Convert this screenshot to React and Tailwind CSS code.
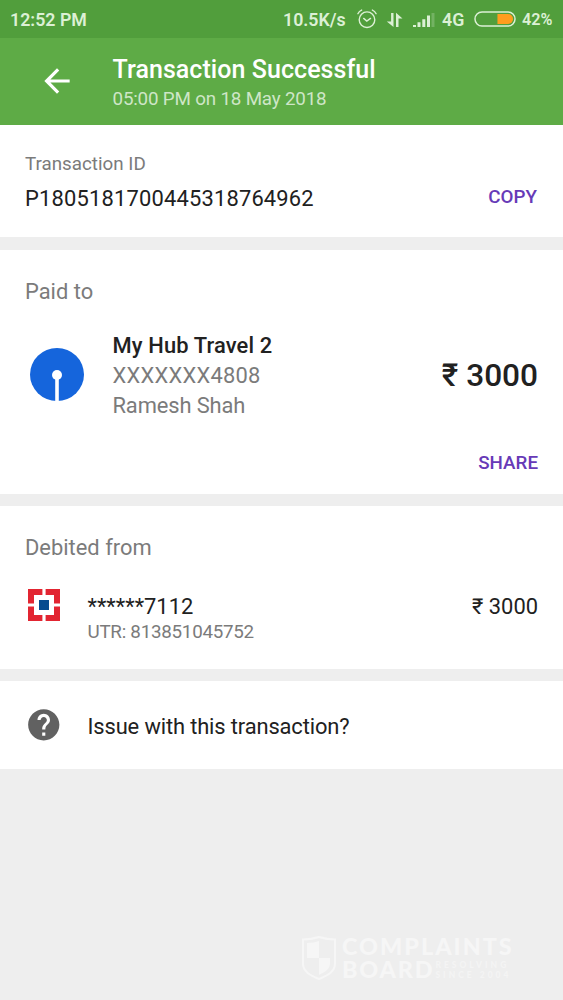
import React from 'react';

const StatusBar = () => {
  return (
    <div className="flex h-[38px] items-center bg-[#519e3c] pl-[10px] pr-[9px] pt-px text-[17.8px] font-semibold text-[#dcf0d5]">
      <span className="w-[273px] whitespace-nowrap leading-none">12:52 PM</span>
      <span className="w-[74px] whitespace-nowrap leading-none">10.5K/s</span>
      <svg className="mb-[2px] h-5 w-5 shrink-0" viewBox="0 0 20 20" fill="none" stroke="currentColor" strokeWidth="1.4" strokeLinecap="round">
        <circle cx="10" cy="10.7" r="7.8" />
        <path d="M6.7 9.4l3.1 2.7 3.7-2.7M.9 4.7Q2 2.3 4.6 1.1M19.1 4.7Q18 2.3 15.4 1.1" />
      </svg>
      <svg className="ml-[9px] h-4 w-[18px] shrink-0" viewBox="0 0 18 16" fill="currentColor">
        <path d="M5.1 1h2.4v14L.8 9.4h4.3zM10 15V.8l6.5 5.8h-4V15z" />
      </svg>
      <svg className="ml-[8px] h-4 w-[24px] shrink-0" viewBox="0 0 24 16" fill="currentColor">
        <path d="M1 13h3v2H1zM5.5 10.2h3V15h-3zM10.3 7.2h3V15h-3zM15 3.6h3V15h-3z" />
        <path opacity=".25" d="M19.5 1h3v14h-3z" />
      </svg>
      <span className="ml-[6px] w-[26px] leading-none">4G</span>
      <svg className="mb-px ml-[6px] h-[18px] w-[42px] shrink-0" viewBox="0 0 43 18" fill="none">
        <rect x="1" y="1.8" width="41" height="14.4" rx="7.2" stroke="currentColor" strokeWidth="1.5" />
        <path d="M24 4h11a5 5 0 0 1 0 10H24z" fill="#ff9d1e" />
      </svg>
      <span className="ml-[6px] pt-px text-[16.2px] leading-none">42%</span>
    </div>
  );
};

const Header = () => {
  return (
    <header className="flex h-[87px] items-center bg-[#5eab46] pl-[37.5px]">
      <svg className="mb-px mr-[37px] h-[38px] w-[38px] shrink-0" viewBox="0 0 24 24" fill="#fff">
        <path d="M20 11H7.83l5.59-5.59L12 4l-8 8 8 8 1.41-1.41L7.83 13H20v-2z" />
      </svg>
      <div className="pt-[6px]">
        <h1 className="text-[25px] font-medium leading-[30px] tracking-[0.06px] text-white">Transaction Successful</h1>
        <p className="text-[18.8px] leading-[29px] tracking-[-0.18px] text-[#cee6c7]">05:00 PM on 18 May 2018</p>
      </div>
    </header>
  );
};

const TransactionId = () => {
  return (
    <section className="flex h-[112px] items-start justify-between bg-white pl-[25px] pr-[26px] pt-[26px]">
      <div>
        <p className="text-[18.8px] leading-[26px] text-[#7b7b7b]">Transaction ID</p>
        <p className="pt-[7px] text-[21.9px] leading-[30px] tracking-[0.19px]">P1805181700445318764962</p>
      </div>
      <button className="mt-[34px] text-[18.8px] font-medium leading-[24px] text-[#673ab7]">COPY</button>
    </section>
  );
};

const BankLogo = () => {
  return (
    <svg className="mb-[3px] h-[53px] w-[54px] shrink-0" viewBox="0 0 54 53">
      <ellipse cx="27" cy="26.5" rx="27" ry="26.4" fill="#1565dc" />
      <circle cx="27" cy="27" r="5" fill="#fff" />
      <path d="M25.2 28h3.6v25h-3.6z" fill="#fff" />
    </svg>
  );
};

const PaidTo = () => {
  return (
    <section className="h-[244px] bg-white pl-[25px] pr-[25px] pt-[27px]">
      <h2 className="text-[21.9px] leading-[30px] text-[#7b7b7b]">Paid to</h2>
      <div className="mt-[24px] flex h-[89px] items-center pl-[5px]">
        <BankLogo />
        <div className="ml-[28.5px] grow text-[21.9px] leading-[30px] text-[#7b7b7b]">
          <p className="font-medium tracking-[0.14px] text-[#212121]">My Hub Travel 2</p>
          <p className="tracking-[0.26px]">XXXXXXX4808</p>
          <p className="tracking-[-0.12px]">Ramesh Shah</p>
        </div>
        <span className="text-[31.6px] font-medium leading-none">₹ 3000</span>
      </div>
      <div className="mt-[31px] flex justify-end">
        <button className="text-[18.8px] font-medium leading-[24px] text-[#673ab7]">SHARE</button>
      </div>
    </section>
  );
};

const DebitedFrom = () => {
  return (
    <section className="h-[163px] bg-white pl-[25px] pr-[25px] pt-[27px]">
      <h2 className="text-[21.9px] leading-[30px] text-[#7b7b7b]">Debited from</h2>
      <div className="mt-[26px] flex items-start pl-[3px]">
        <svg className="h-8 w-8 shrink-0" viewBox="0 0 32 32">
          <path d="M0 0h32v32H0z" fill="#e22531" />
          <path d="M6 6h20v20H6zM14.4 0h3.2v32h-3.2zM0 14.4h32v3.2H0z" fill="#fff" />
          <path d="M11 11h10v10H11z" fill="#064b8f" />
        </svg>
        <div className="ml-[27.5px] grow pt-[4px]">
          <p className="text-[21.9px] leading-[28px]">******7112</p>
          <p className="text-[18.8px] leading-[23px] tracking-[-0.26px] text-[#7b7b7b]">UTR: 813851045752</p>
        </div>
        <span className="pt-[4px] text-[21.9px] leading-[28px]">₹ 3000</span>
      </div>
    </section>
  );
};

const Issue = () => {
  return (
    <section className="flex h-[88px] items-center bg-white pl-[25px]">
      <svg className="h-[37.5px] w-[37.5px] shrink-0" viewBox="0 0 24 24" fill="#616161">
        <path d="M12 2C6.48 2 2 6.48 2 12s4.48 10 10 10 10-4.48 10-10S17.52 2 12 2zm1 17h-2v-2h2v2zm2.07-7.75l-.9.92C13.45 12.9 13 13.5 13 15h-2v-.5c0-1.1.45-2.1 1.17-2.83l1.24-1.26c.37-.36.59-.86.59-1.41 0-1.1-.9-2-2-2s-2 .9-2 2H8c0-2.21 1.79-4 4-4s4 1.79 4 4c0 .88-.36 1.68-.93 2.25z" />
      </svg>
      <span className="ml-[25px] pt-[4px] text-[21.9px] tracking-[-0.13px]">Issue with this transaction?</span>
    </section>
  );
};

const Watermark = () => {
  return (
    <div className="flex items-center pl-[301px] font-['Lato',sans-serif] text-[#f6f6f6]">
      <svg className="h-[46px] w-[36px] shrink-0" viewBox="0 0 36 46" fill="none">
        <path d="M18 2Q26 4.5 34 4.5V29q0 9-16 15Q2 38 2 29V4.5Q10 4.5 18 2z" stroke="currentColor" strokeWidth="2" />
        <path d="M6 8q7 0 12-2v17h11v6q0 6-11 11V23H6z" fill="currentColor" />
      </svg>
      <div className="ml-[5px] pt-px font-black">
        <p className="text-[23.4px] leading-[23px] tracking-[2px]">COMPLAINTS</p>
        <div className="flex items-center">
          <p className="text-[23.4px] leading-[23px] tracking-[1.8px]">BOARD</p>
          <div className="ml-px pt-px text-[8.5px] leading-[10.5px] text-[#f4f4f4]">
            <p className="tracking-[3px]">RESOLVING</p>
            <p className="tracking-[3px]">SINCE 2004</p>
          </div>
        </div>
      </div>
    </div>
  );
};

const App = () => {
  return (
    <div className="flex h-[1000px] w-[563px] flex-col overflow-hidden bg-[#eeeeee] font-['Roboto',sans-serif] text-[#212121]">
      <StatusBar />
      <Header />
      <main className="flex grow flex-col">
        <TransactionId />
        <div className="mt-[13px]">
          <PaidTo />
        </div>
        <div className="mt-3">
          <DebitedFrom />
        </div>
        <div className="mt-3">
          <Issue />
        </div>
        <div className="mt-auto pb-[19px]">
          <Watermark />
        </div>
      </main>
    </div>
  );
};

export default App;
